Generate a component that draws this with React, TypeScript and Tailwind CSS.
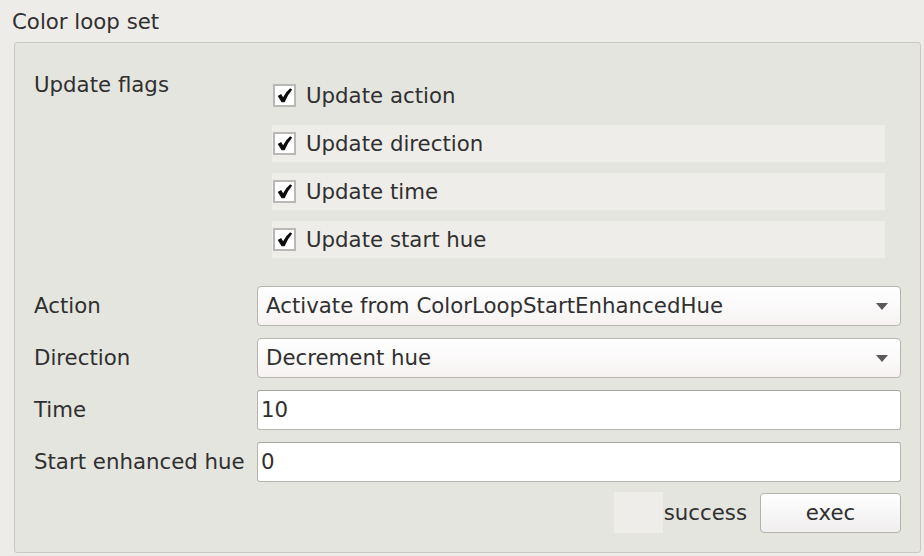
import React from "react";

function Check({ label, shaded }: { label: string; shaded: boolean }) {
  return (
    <div className={`h-[37px] flex items-center ${shaded ? "bg-[#efede9]" : ""}`}>
      <div className="ml-[1px] w-[23px] h-[23px] border-2 border-[#b8b8b6] bg-white flex items-center justify-center">
        <svg width="17" height="17" viewBox="0 0 16 16">
          <path d="M1.6 8.4 L4.8 6.6 L6.7 9.6 Q9.4 4.4 13.4 1.2 L15.2 2.6 Q10.8 7.4 8.1 14.4 L5.3 14.4 Z" fill="#0d0d0d" />
        </svg>
      </div>
      <span className="ml-[10px]">{label}</span>
    </div>
  );
}

function Combo({ value }: { value: string }) {
  return (
    <div className="flex-1 h-[40px] rounded-[4px] border border-[#b7b4b0] bg-gradient-to-b from-[#ffffff] to-[#f7f3f3] flex items-center pl-[8px] pr-[12px]">
      <span className="flex-1">{value}</span>
      <svg width="12" height="7" viewBox="0 0 12 7">
        <path d="M0 0 L12 0 L6 7 Z" fill="#595959" />
      </svg>
    </div>
  );
}

function Input({ value }: { value: string }) {
  return (
    <div className="flex-1 h-[40px] rounded-[3px] border border-[#b7b4b0] border-t-[#a9a6a2] bg-white flex items-center pl-[3px]">
      {value}
    </div>
  );
}

function Row({ label, children }: { label: string; children: React.ReactNode }) {
  return (
    <div className="flex items-center h-[40px]">
      <div className="w-[223px] whitespace-nowrap">{label}</div>
      {children}
    </div>
  );
}

export default function App() {
  return (
    <div className="w-[924px] h-[556px] bg-[#eeece8] text-[#303030] text-[21.3px] leading-[24px] font-['DejaVu_Sans',sans-serif] overflow-hidden">
      <div className="pl-[12px] pt-[10px] h-[42px]">Color loop set</div>
      <div className="ml-[14px] w-[907px] h-[511px] border border-[#c9c8c3] rounded-[3px] bg-[#e5e5df] pt-[30px] pl-[19px] pr-[19px]">
        <div className="flex">
          <div className="w-[238px]">Update flags</div>
          <div className="w-[613px] pt-[4px] flex flex-col gap-[11px]">
            <Check label="Update action" shaded={false} />
            <Check label="Update direction" shaded={true} />
            <Check label="Update time" shaded={true} />
            <Check label="Update start hue" shaded={true} />
          </div>
        </div>
        <div className="mt-[28px] flex flex-col gap-[12px]">
          <Row label="Action">
            <Combo value="Activate from ColorLoopStartEnhancedHue" />
          </Row>
          <Row label="Direction">
            <Combo value="Decrement hue" />
          </Row>
          <Row label="Time">
            <Input value="10" />
          </Row>
          <Row label="Start enhanced hue">
            <Input value="0" />
          </Row>
        </div>
        <div className="mt-[10px] h-[41px] flex items-center justify-end">
          <div className="w-[49px] h-[41px] bg-[#efede9]" />
          <span className="ml-[1px]">success</span>
          <div className="ml-[13px] w-[141px] h-[40px] rounded-[4px] border border-[#b5b2ae] bg-gradient-to-b from-[#ffffff] to-[#f0eeee] flex items-center justify-center">
            exec
          </div>
        </div>
      </div>
    </div>
  );
}
